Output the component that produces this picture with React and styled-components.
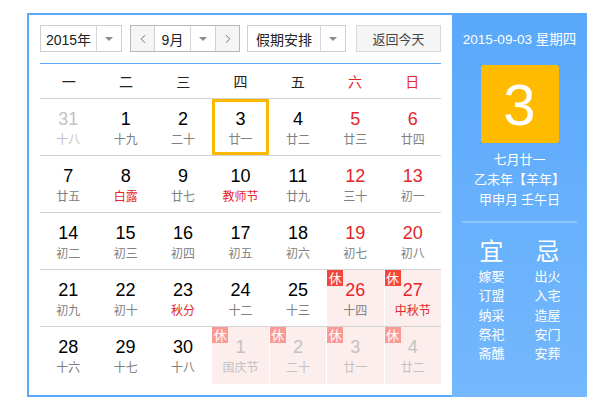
import React from "react";
import styled, { createGlobalStyle, css } from "styled-components";
import { ChevronLeft, ChevronRight } from "lucide-react";

const GlobalStyle = createGlobalStyle`
  body {
    margin: 0;
    background: #fff;
    font-family: "Liberation Sans", Arial, "Noto Sans CJK SC", sans-serif;
  }
`;

const RED = "#e3262b";
const BLUE = "#5ba9fb";

const weekdays = ["一", "二", "三", "四", "五", "六", "日"];

// [day, lunar, flags]
const weeks = [
  [
    [31, "十八", { other: true }],
    [1, "十九"],
    [2, "二十"],
    [3, "廿一", { today: true }],
    [4, "廿二"],
    [5, "廿三", { weekend: true }],
    [6, "廿四", { weekend: true }],
  ],
  [
    [7, "廿五"],
    [8, "白露", { fest: true }],
    [9, "廿七"],
    [10, "教师节", { fest: true }],
    [11, "廿九"],
    [12, "三十", { weekend: true }],
    [13, "初一", { weekend: true }],
  ],
  [
    [14, "初二"],
    [15, "初三"],
    [16, "初四"],
    [17, "初五"],
    [18, "初六"],
    [19, "初七", { weekend: true }],
    [20, "初八", { weekend: true }],
  ],
  [
    [21, "初九"],
    [22, "初十"],
    [23, "秋分", { fest: true }],
    [24, "十二"],
    [25, "十三"],
    [26, "十四", { weekend: true, rest: true }],
    [27, "中秋节", { weekend: true, rest: true, fest: true }],
  ],
  [
    [28, "十六"],
    [29, "十七"],
    [30, "十八"],
    [1, "国庆节", { other: true, rest: true }],
    [2, "二十", { other: true, rest: true }],
    [3, "廿一", { other: true, rest: true }],
    [4, "廿二", { other: true, rest: true }],
  ],
];

const yi = ["嫁娶", "订盟", "纳采", "祭祀", "斋醮"];
const ji = ["出火", "入宅", "造屋", "安门", "安葬"];

function Select({ label, width }) {
  return (
    <SelectBox>
      <SelectLabel $width={width}>{label}</SelectLabel>
      <ArrowCell>
        <Caret />
      </ArrowCell>
    </SelectBox>
  );
}

export default function App() {
  return (
    <>
      <GlobalStyle />
      <Widget>
        <Main>
          <Toolbar>
            <Select label="2015年" width={55} />
            <MonthGroup>
              <NavBtn>
                <ChevronLeft size={14} strokeWidth={1.4} />
              </NavBtn>
              <MonthLabel>9月</MonthLabel>
              <ArrowCell>
                <Caret />
              </ArrowCell>
              <NavBtn $right>
                <ChevronRight size={14} strokeWidth={1.4} />
              </NavBtn>
            </MonthGroup>
            <Select label="假期安排" width={72} />
            <TodayBtn>返回今天</TodayBtn>
          </Toolbar>

          <Head>
            {weekdays.map((w, i) => (
              <HeadCell key={w} $red={i > 4}>
                {w}
              </HeadCell>
            ))}
          </Head>

          {weeks.map((week, wi) => (
            <Week key={wi} $last={wi === weeks.length - 1}>
              {week.map(([d, lunar, f = {}], di) => (
                <Cell key={di} $rest={f.rest} $today={f.today}>
                  {f.rest && <Badge $faded={f.other}>休</Badge>}
                  <Num $red={f.weekend} $other={f.other}>
                    {d}
                  </Num>
                  <Lunar $red={f.fest && !f.other} $other={f.other}>
                    {lunar}
                  </Lunar>
                </Cell>
              ))}
            </Week>
          ))}
        </Main>

        <Side>
          <DateLine>2015-09-03 星期四</DateLine>
          <BigDay>3</BigDay>
          <LunarInfo>
            <div>七月廿一</div>
            <div>乙未年【羊年】</div>
            <div>甲申月 壬午日</div>
          </LunarInfo>
          <Divider />
          <Advice>
            <AdviceCol>
              <AdviceHead>宜</AdviceHead>
              {yi.map((t) => (
                <div key={t}>{t}</div>
              ))}
            </AdviceCol>
            <AdviceCol>
              <AdviceHead>忌</AdviceHead>
              {ji.map((t) => (
                <div key={t}>{t}</div>
              ))}
            </AdviceCol>
          </Advice>
        </Side>
      </Widget>
    </>
  );
}

const Widget = styled.div`
  display: flex;
  margin: 13px 0 0 27px;
  width: 560px;
  height: 384px;
`;

const Main = styled.div`
  box-sizing: border-box;
  width: 425px;
  border: 2px solid ${BLUE};
  border-right: none;
  padding: 10px 11px 0 11px;
`;

const Toolbar = styled.div`
  display: flex;
  align-items: center;
  height: 27px;
  margin-bottom: 11px;
  font-family: "Liberation Sans", Arial, "Noto Sans CJK SC", sans-serif;
  font-size: 14px;
  color: #222;
`;

const SelectBox = styled.div`
  display: flex;
  height: 27px;
  box-sizing: border-box;
  border: 1px solid #cfcfcf;
  margin-right: 8px;
`;

const SelectLabel = styled.div`
  width: ${(p) => p.$width}px;
  display: flex;
  align-items: center;
  justify-content: center;
`;

const ArrowCell = styled.div`
  width: 24px;
  display: flex;
  align-items: center;
  justify-content: center;
  border-left: 1px solid #d6d6d6;
`;

const Caret = styled.span`
  width: 0;
  height: 0;
  border-left: 4px solid transparent;
  border-right: 4px solid transparent;
  border-top: 4px solid #8a8a8a;
`;

const MonthGroup = styled.div`
  display: flex;
  height: 27px;
  box-sizing: border-box;
  border: 1px solid #b8b8b8;
  margin-right: 7px;
`;

const NavBtn = styled.div`
  width: 23px;
  display: flex;
  align-items: center;
  justify-content: center;
  background: #f5f5f5;
  color: #555;
  ${(p) =>
    p.$right
      ? css`
          border-left: 1px solid #d0d0d0;
        `
      : css`
          border-right: 1px solid #d0d0d0;
        `}
`;

const MonthLabel = styled.div`
  width: 35px;
  display: flex;
  align-items: center;
  justify-content: center;
`;

const TodayBtn = styled.div`
  margin-left: auto;
  width: 85px;
  height: 27px;
  box-sizing: border-box;
  border: 1px solid #d8d8d8;
  background: #f5f5f5;
  color: #444;
  font-size: 13px;
  display: flex;
  align-items: center;
  justify-content: center;
`;

const Head = styled.div`
  display: grid;
  grid-template-columns: repeat(7, 1fr);
  border-top: 1px solid ${BLUE};
  border-bottom: 1px solid #d2d2d2;
  height: 34px;
`;

const HeadCell = styled.div`
  display: flex;
  align-items: center;
  justify-content: center;
  font-size: 14px;
  color: ${(p) => (p.$red ? RED : "#222")};
  font-family: "Noto Sans CJK SC", sans-serif;
`;

const Week = styled.div`
  display: grid;
  grid-template-columns: repeat(7, 1fr);
  column-gap: 1px;
  height: 57px;
  box-sizing: border-box;
  border-bottom: ${(p) => (p.$last ? "none" : "1px solid #d2d2d2")};
`;

const Cell = styled.div`
  position: relative;
  box-sizing: border-box;
  display: flex;
  flex-direction: column;
  align-items: center;
  padding-top: 9px;
  background: ${(p) => (p.$rest ? "#fdeeee" : "transparent")};
  ${(p) =>
    p.$today &&
    css`
      border: 3px solid #fbb800;
      padding-top: 6px;
    `}
`;

const Badge = styled.span`
  position: absolute;
  top: 0;
  left: 0;
  width: 16px;
  height: 16px;
  line-height: 16px;
  text-align: center;
  font-size: 13px;
  color: #fff;
  background: ${(p) => (p.$faded ? "#fb9a95" : "#f5463c")};
  font-family: "Noto Sans CJK SC", sans-serif;
`;

const Num = styled.div`
  font-size: 18px;
  line-height: 22px;
  color: ${(p) => (p.$other ? "#c2c2c2" : p.$red ? RED : "#000")};
`;

const Lunar = styled.div`
  font-size: 12px;
  line-height: 18px;
  font-family: "Noto Sans CJK SC", sans-serif;
  color: ${(p) => (p.$other ? "#c2c2c2" : p.$red ? RED : "#808080")};
`;

const Side = styled.div`
  width: 135px;
  display: flex;
  flex-direction: column;
  align-items: center;
  background: linear-gradient(#59a8fb, #74b8fd);
  color: #fff;
  padding-top: 17px;
  font-family: "Liberation Sans", Arial, "Noto Sans CJK SC", sans-serif;
`;

const DateLine = styled.div`
  font-size: 13.5px;
  line-height: 20px;
  white-space: nowrap;
`;

const BigDay = styled.div`
  margin-top: 15px;
  width: 78px;
  height: 78px;
  border-radius: 3px;
  background: #ffbb00;
  display: flex;
  align-items: center;
  justify-content: center;
  font-size: 58px;
`;

const LunarInfo = styled.div`
  margin-top: 6px;
  font-size: 13px;
  line-height: 20px;
  text-align: center;
  font-family: "Noto Sans CJK SC", sans-serif;
`;

const Divider = styled.div`
  margin-top: 12px;
  width: 115px;
  height: 2px;
  background: #8fc5fd;
`;

const Advice = styled.div`
  margin-top: 12px;
  display: flex;
  gap: 30px;
  font-family: "Noto Sans CJK SC", sans-serif;
  font-size: 13px;
  line-height: 19.3px;
`;

const AdviceCol = styled.div`
  display: flex;
  flex-direction: column;
  align-items: center;
`;

const AdviceHead = styled.div`
  font-size: 24px;
  line-height: 30px;
  margin-bottom: 1px;
`;
